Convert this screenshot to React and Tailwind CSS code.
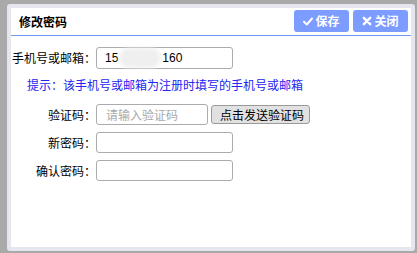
import React from 'react';

const cjk = { fontFamily: '"Noto Sans CJK SC", "Liberation Sans", sans-serif' };

function Row({ label, children, className = '' }) {
  return (
    <div className={`flex items-center ${className}`}>
      <label className="w-[85px] shrink-0 text-right text-[12px] leading-none text-black">{label}</label>
      {children}
    </div>
  );
}

export default function App() {
  return (
    <div className="w-[417px] h-[253px] bg-[#a9a9a9] pl-[7px] pt-[4px] pr-[2px] pb-[2px] flex" style={cjk}>
      <div className="flex-1 flex flex-col bg-white border-4 border-[#e6e6ee] rounded-[3px]">
        {/* 标题栏 */}
        <div className="h-[28px] shrink-0 flex items-center justify-between pl-[8px] pr-[3px] border-b border-[#7393f7]">
          <h3 className="text-[12px] font-bold text-black leading-none">修改密码</h3>
          <div className="flex items-center gap-[4px] pb-[1px]">
            <button className="w-[55px] h-[22px] flex items-center justify-center gap-[2px] rounded-[3px] bg-[#7c9cff] text-white text-[12px] font-bold leading-none">
              <svg width="10" height="9" viewBox="0 0 10 9">
                <path d="M1 4.8 L3.8 7.5 L9 1.5" fill="none" stroke="white" strokeWidth="2" strokeLinecap="round" strokeLinejoin="round" />
              </svg>
              保存
            </button>
            <button className="w-[55px] h-[22px] flex items-center justify-center gap-[2px] rounded-[3px] bg-[#7c9cff] text-white text-[12px] font-bold leading-none">
              <svg width="10" height="10" viewBox="0 0 10 10">
                <path d="M1.8 1.8 L8.2 8.2 M8.2 1.8 L1.8 8.2" fill="none" stroke="white" strokeWidth="2.4" strokeLinecap="round" />
              </svg>
              关闭
            </button>
          </div>
        </div>

        {/* 表单 */}
        <div className="flex flex-col">
          <Row label="手机号或邮箱：" className="mt-[11px]">
            <div className="w-[137px] h-[22px] border border-[#ababab] rounded-[3px] flex items-center pl-[8px] text-[12px] text-black" style={{ fontFamily: '"Liberation Sans", Arial, sans-serif' }}>
              <span>15</span>
              <span className="w-[42px] h-[20px] mx-[1px] rounded-full bg-[#efefef] blur-[2px]" />
              <span>160</span>
            </div>
          </Row>

          <p className="mt-[10px] pl-[16px] text-[12px] leading-none text-[#2424f0]">提示：该手机号或邮箱为注册时填写的手机号或邮箱</p>

          <Row label="验证码：" className="mt-[13px]">
            <input
              placeholder="请输入验证码"
              className="w-[112px] h-[21px] border border-[#ababab] rounded-[3px] pl-[9px] text-[12px] outline-none placeholder-[#a9a9a9]"
            />
            <button className="ml-[3px] w-[99px] h-[19px] border border-[#9a9a9a] rounded-[3px] bg-[#e1e1e1] text-[12px] leading-none text-black pl-[3px]">
              点击发送验证码
            </button>
          </Row>

          <Row label="新密码：" className="mt-[7px]">
            <input type="password" className="w-[137px] h-[21px] border border-[#ababab] rounded-[3px] outline-none" />
          </Row>

          <Row label="确认密码：" className="mt-[7px]">
            <input type="password" className="w-[137px] h-[21px] border border-[#ababab] rounded-[3px] outline-none" />
          </Row>
        </div>
      </div>
    </div>
  );
}
